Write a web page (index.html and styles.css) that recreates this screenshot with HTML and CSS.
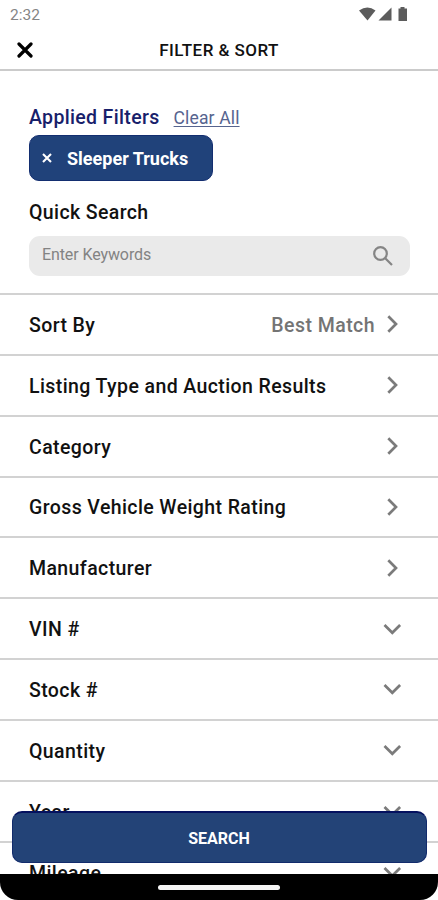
FILE: index.html
```html
<!DOCTYPE html>
<html lang="en">
<head>
<meta charset="utf-8">
<title>Filter &amp; Sort</title>
<link rel="stylesheet" href="styles.css">
</head>
<body>
<svg width="0" height="0" class="defs" aria-hidden="true">
  <symbol id="right" viewBox="0 0 20 20"><path d="M6.300 2.200 14 10 6.300 17.800"/></symbol>
  <symbol id="down" viewBox="0 0 20 20"><path d="M2.500 6 10.300 13.800 18.100 6"/></symbol>
</svg>
<div class="screen">
  <div class="status">
    <span class="time">2:32</span>
    <svg class="signals" width="50" height="16" viewBox="0 0 50 16">
      <path d="M0 3.500Q8.500-2.500 16.500 3.500L8.500 13.500Z"/>
      <path d="M19.500 13.500 32.500 .5V13.500Z"/>
      <path d="M41.500 0h4v1.500h2.500v12.500h-8.500V1.500h2Z"/>
    </svg>
  </div>
  <header class="header">
    <svg class="close" width="16" height="16" viewBox="0 0 16 16"><path d="M2 2 14 14M14 2 2 14"/></svg>
    <h1 class="title">FILTER &amp; SORT</h1>
  </header>
  <section class="filters">
    <div class="applied"><h2 class="applied-title">Applied Filters</h2><a class="clear">Clear All</a></div>
    <div class="chip">
      <svg class="chip-x" width="10" height="10" viewBox="0 0 10 10"><path d="M1 1 9 9M9 1 1 9"/></svg>
      <span class="chip-label">Sleeper Trucks</span>
    </div>
    <h2 class="quick">Quick Search</h2>
    <div class="search">
      <span class="placeholder">Enter Keywords</span>
      <svg class="lens" width="22" height="22" viewBox="0 0 22 22"><circle cx="8.500" cy="8.500" r="6.300"/><path d="M13 13 20 20"/></svg>
    </div>
  </section>
  <div class="rows">
    <div class="row"><span class="label">Sort By</span><span class="value">Best Match</span><svg class="chev"><use href="#right"/></svg></div>
    <div class="row"><span class="label">Listing Type and Auction Results</span><svg class="chev"><use href="#right"/></svg></div>
    <div class="row"><span class="label">Category</span><svg class="chev"><use href="#right"/></svg></div>
    <div class="row"><span class="label">Gross Vehicle Weight Rating</span><svg class="chev"><use href="#right"/></svg></div>
    <div class="row"><span class="label">Manufacturer</span><svg class="chev"><use href="#right"/></svg></div>
    <div class="row"><span class="label">VIN #</span><svg class="chev"><use href="#down"/></svg></div>
    <div class="row"><span class="label">Stock #</span><svg class="chev"><use href="#down"/></svg></div>
    <div class="row"><span class="label">Quantity</span><svg class="chev"><use href="#down"/></svg></div>
    <div class="row"><span class="label">Year</span><svg class="chev"><use href="#down"/></svg></div>
    <div class="row"><span class="label">Mileage</span><svg class="chev"><use href="#down"/></svg></div>
  </div>
  <div class="button">SEARCH</div>
  <div class="navbar"><div class="handle"></div></div>
</div>
</body>
</html>
```
FILE: styles.css
```css
* { box-sizing: border-box; }
body { margin: 0; background: #fff; font-family: Roboto, sans-serif; color: #111; }
h1, h2 { margin: 0; font-weight: 500; }
svg { display: block; flex: none; }
.defs { position: absolute; }
.screen { position: relative; width: 438px; height: 900px; overflow: hidden; background: #fff; }
.status { height: 30px; display: flex; justify-content: space-between; padding: 6px 29px 0 10px; }
.time { font-size: 15.5px; line-height: 18px; color: #858585; }
.signals { fill: #5c5c5c; margin-top: 1px; }
.header { height: 41px; border-bottom: 2px solid #cbcbcb; display: grid; grid-template-columns: 34px 1fr 34px; align-items: center; }
.close { margin-left: 17px; stroke: #000; stroke-width: 3.2; stroke-linecap: round; }
.title { font-size: 17px; line-height: 20px; text-align: center; letter-spacing: .45px; }
.filters { height: 222px; padding: 35px 28px 0 29px; }
.applied { display: flex; align-items: baseline; gap: 14px; height: 29px; line-height: 24px; }
.applied-title { font-size: 19.5px; color: #17206a; letter-spacing: .34px; white-space: nowrap; }
.clear { font-size: 17.5px; color: #56648f; text-decoration: underline; text-decoration-thickness: 1px; text-underline-offset: 2px; white-space: nowrap; letter-spacing: .15px; }
.chip { width: 184px; height: 46px; border-radius: 10px; background: #20427a; border: 1px solid #132e70; display: flex; align-items: center; padding-left: 12px; gap: 15px; color: #fff; }
.chip-x { stroke: #fff; stroke-width: 2.1; }
.chip-label { font-size: 18px; font-weight: 700; line-height: 24px; white-space: nowrap; padding-top: 2px; }
.quick { font-size: 19.5px; line-height: 24px; margin-top: 20px; letter-spacing: .38px; }
.search { margin-top: 11px; height: 40px; width: 381px; border-radius: 11px; background: #eaeaea; display: flex; justify-content: space-between; padding: 9px 16px 0 13px; }
.placeholder { font-size: 16px; line-height: 20px; color: #838383; letter-spacing: -.1px; }
.lens { fill: none; stroke: #858585; stroke-width: 2.2; }
.row { height: 60.85px; border-top: 2px solid #d2d2d2; display: flex; align-items: center; padding: 3px 36px 0 29px; }
.label { flex: 1; font-size: 19.5px; font-weight: 500; line-height: 24px; letter-spacing: .4px; white-space: nowrap; }
.value { font-size: 19.5px; font-weight: 500; line-height: 24px; color: #747474; margin-right: 7px; letter-spacing: .45px; }
.chev { width: 20px; height: 20px; margin-top: -3px; fill: none; stroke: #7b7b7b; stroke-width: 2.7; }
.button { position: absolute; left: 12px; top: 811px; width: 415px; height: 52px; border-radius: 10px; background: #234377; border: 1px solid #122b6c; border-top: 2px solid #04115f; color: #fff; font-size: 16px; font-weight: 700; line-height: 51px; text-align: center; text-indent: -1px; }
.navbar { position: absolute; left: 0; right: 0; bottom: 0; height: 26px; background: #000; border-radius: 0 0 18px 18px; display: flex; justify-content: center; padding-top: 11px; }
.handle { width: 122px; height: 5px; border-radius: 2.5px; background: #f5f5f5; }
```
